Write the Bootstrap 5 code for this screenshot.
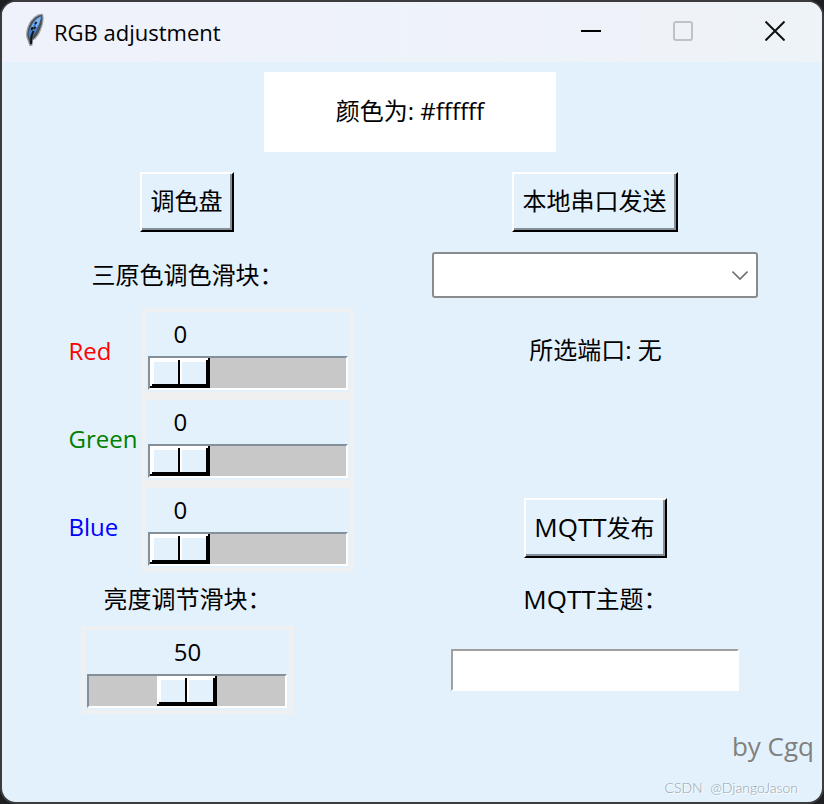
<!DOCTYPE html>
<html lang="zh-CN">
<head>
<meta charset="utf-8">
<meta name="viewport" content="width=device-width, initial-scale=1">
<title>RGB adjustment</title>
<link href="https://cdn.jsdelivr.net/npm/bootstrap@5.3.0/dist/css/bootstrap.min.css" rel="stylesheet">
<style>
  body {
    background: #1e1f22;
    color: #000;
    font-family: "Open Sans", "Noto Sans CJK SC", sans-serif;
    font-size: 24px;
    line-height: 32px;
  }
  .app-window {
    background: #e3f1fc;
    border: 2px solid #3c3c3e;
    border-radius: 16px;
  }
  .title-bar { background: linear-gradient(90deg, #eff2fb, #eef3f8); height: 60px; }
  .title-text { font-size: 22px; font-weight: 400; }
  .caption-btn { width: 92px; height: 60px; background: none; border: 0; padding: 0 2px 8px 0; }

  .panel-grid {
    display: grid;
    grid-template-columns: 5fr 6fr;
    grid-template-rows: 100px 80px 66px 88px 88px 88px 54px 88px;
    padding-right: 4px;
  }
  .span-all { grid-column: 1 / -1; }
  .swatch { width: 292px; height: 80px; background: #fff; padding-bottom: 2px; }

  .tk-btn {
    height: 60px;
    padding: 0 10px 2px 8px;
    color: #000;
    background: #e3f1fc;
    border: 2px solid;
    border-color: #fff #000 #000 #fff;
    box-shadow: inset -2px -2px 0 #858f99;
  }
  .latin { font-size: 26px; }

  .port-select {
    width: 326px;
    height: 46px;
    border: 2px solid #8b8b8b;
    border-radius: 3px;
    background-color: #fff;
    background-image: url("data:image/svg+xml,%3Csvg xmlns='http://www.w3.org/2000/svg' viewBox='0 0 16 16'%3E%3Cpath d='M0.500 4.500 8 12 15.500 4.500' fill='none' stroke='%23707070' stroke-width='1.600'/%3E%3C/svg%3E");
    background-position: right 8px center;
    background-size: 16px 16px;
  }
  .topic-input {
    width: 288px;
    height: 42px;
    border: 2px solid;
    border-color: #a0a0a0 #fff #fff #a0a0a0;
    background: #fff;
  }

  .channel { padding-left: 48px; }
  .channel-name { width: 74px; padding-bottom: 2px; }
  .scale-box {
    width: 212px;
    height: 88px;
    border: 4px solid #f0f0f0;
    padding: 6px 2px 2px;
  }
  .scale-value {
    width: 60px;
    height: 38px;
    margin-left: calc(2px + (100% - 64px) * var(--pos));
  }
  .scale-range {
    -webkit-appearance: none;
    appearance: none;
    width: 100%;
    height: 34px;
    margin: 0;
    background: #c8c8c8;
    border: 2px solid;
    border-color: #858f99 #fff #fff #858f99;
  }
  .scale-range::-webkit-slider-thumb {
    -webkit-appearance: none;
    width: 60px;
    height: 30px;
    border: 0;
    background:
      linear-gradient(#000, #000) right bottom / 2px 30px no-repeat,
      linear-gradient(#000, #000) right bottom / 4px 28px no-repeat,
      linear-gradient(#000, #000) left bottom / 60px 2px no-repeat,
      linear-gradient(#000, #000) right bottom / 58px 4px no-repeat,
      linear-gradient(#000, #000) 28px 2px / 2px 26px no-repeat,
      linear-gradient(#fff, #fff) 30px 2px / 2px 24px no-repeat,
      linear-gradient(#fff, #fff) left top / 60px 4px no-repeat,
      linear-gradient(#fff, #fff) left top / 4px 30px no-repeat,
      #e3f1fc;
  }
  .is-red { color: #f00; }
  .is-green { color: #008000; }
  .is-blue { color: #00f; }

  .author { font-size: 26px; color: #808080; padding: 16px 8px 0 0; }
  .credit {
    font-family: Lato, "Open Sans", sans-serif;
    font-size: 14px;
    font-weight: 300;
    line-height: 20px;
    color: #9aa3aa;
    text-shadow: 1px 1px 0 #fff;
    padding: 0 24px 4px 0;
  }
</style>
</head>
<body>
<main class="app-window min-vh-100 d-flex flex-column overflow-hidden">
  <header class="title-bar d-flex align-items-center">
    <svg class="ms-4 mb-1 flex-shrink-0" width="20" height="34" viewBox="0 0 20 34" aria-hidden="true">
      <path d="M16.500 1.500C11 1 5 6 2.500 13C0.500 18 0 23 2 27L4 32.500L6 32L6.500 27C11 25 14 19 16 12C17 8 17.500 5 16.500 1.500Z" fill="#4b5058" stroke="#9b9fa3" stroke-width="1.200"/>
      <path d="M15.500 3C11 4 7 9 4.500 14C2.500 18 2 22 3.500 25C9 22 13 15 15.500 3Z" fill="#3f7fc9"/>
      <path d="M15 4C10 5 6 11 4 17L6.500 15L8 11L10.500 10L9.500 14L8 18L13 11Z" fill="#7fb2ec"/>
      <path d="M10.500 9L9 11M9.500 14L8 16M6.500 14L5.500 17M7.500 18L5.500 23L5 31" fill="none" stroke="#10151d" stroke-width="2"/>
    </svg>
    <h1 class="title-text mb-0 me-auto ps-2">RGB adjustment</h1>
    <button class="caption-btn" type="button" aria-label="Minimize">
      <svg width="20" height="20" viewBox="0 0 20 20"><path d="M0 10H20" stroke="#000" stroke-width="2"/></svg>
    </button>
    <button class="caption-btn" type="button" aria-label="Maximize" disabled>
      <svg width="20" height="20" viewBox="0 0 20 20"><rect x="1" y="1" width="18" height="18" rx="2" fill="none" stroke="#bfc3c7" stroke-width="2"/></svg>
    </button>
    <button class="caption-btn" type="button" aria-label="Close">
      <svg width="20" height="20" viewBox="0 0 20 20"><path d="M0.500 0.500 19.500 19.500M19.500 0.500 0.500 19.500" stroke="#111" stroke-width="2"/></svg>
    </button>
  </header>

  <div class="panel-grid">
    <div class="span-all d-flex justify-content-center align-items-center">
      <div class="swatch d-flex justify-content-center align-items-center">颜色为: #ffffff</div>
    </div>

    <div class="d-flex justify-content-center align-items-center"><button class="tk-btn" type="button">调色盘</button></div>
    <div class="d-flex justify-content-center align-items-center"><button class="tk-btn" type="button">本地串口发送</button></div>

    <div class="d-flex justify-content-center align-items-center">三原色调色滑块：</div>
    <div class="d-flex justify-content-center align-items-center">
      <select class="form-select port-select" aria-label="串口"><option></option></select>
    </div>

    <div class="channel d-flex justify-content-center align-items-center">
      <label class="channel-name is-red" for="red">Red</label>
      <div class="scale-box">
        <output class="scale-value d-block text-center" for="red" style="--pos:0">0</output>
        <input class="scale-range d-block" id="red" type="range" min="0" max="255" value="0">
      </div>
    </div>
    <div class="d-flex justify-content-center align-items-center pb-1">所选端口: 无</div>

    <div class="channel d-flex justify-content-center align-items-center">
      <label class="channel-name is-green" for="green">Green</label>
      <div class="scale-box">
        <output class="scale-value d-block text-center" for="green" style="--pos:0">0</output>
        <input class="scale-range d-block" id="green" type="range" min="0" max="255" value="0">
      </div>
    </div>
    <div></div>

    <div class="channel d-flex justify-content-center align-items-center">
      <label class="channel-name is-blue" for="blue">Blue</label>
      <div class="scale-box">
        <output class="scale-value d-block text-center" for="blue" style="--pos:0">0</output>
        <input class="scale-range d-block" id="blue" type="range" min="0" max="255" value="0">
      </div>
    </div>
    <div class="d-flex justify-content-center align-items-center"><button class="tk-btn" type="button"><span class="latin">MQTT</span>发布</button></div>

    <label class="d-flex justify-content-center align-items-center" for="brightness">亮度调节滑块：</label>
    <label class="d-flex justify-content-center align-items-center" for="topic"><span class="latin">MQTT</span>主题：</label>

    <div class="d-flex justify-content-center align-items-center">
      <div class="scale-box">
        <output class="scale-value d-block text-center" for="brightness" style="--pos:0.5">50</output>
        <input class="scale-range d-block" id="brightness" type="range" min="0" max="100" value="50">
      </div>
    </div>
    <div class="d-flex justify-content-center align-items-center"><input class="topic-input" id="topic" type="text"></div>
  </div>

  <div class="author text-end">by Cgq</div>
  <footer class="credit text-end mt-auto">CSDN&nbsp; @DjangoJason</footer>
</main>
<script src="https://cdn.jsdelivr.net/npm/bootstrap@5.3.0/dist/js/bootstrap.bundle.min.js"></script>
<script>
  document.querySelectorAll('.scale-range').forEach(function (range) {
    range.addEventListener('input', function () {
      var out = range.previousElementSibling;
      out.textContent = range.value;
      out.style.setProperty('--pos', range.value / range.max);
    });
  });
</script>
</body>
</html>
